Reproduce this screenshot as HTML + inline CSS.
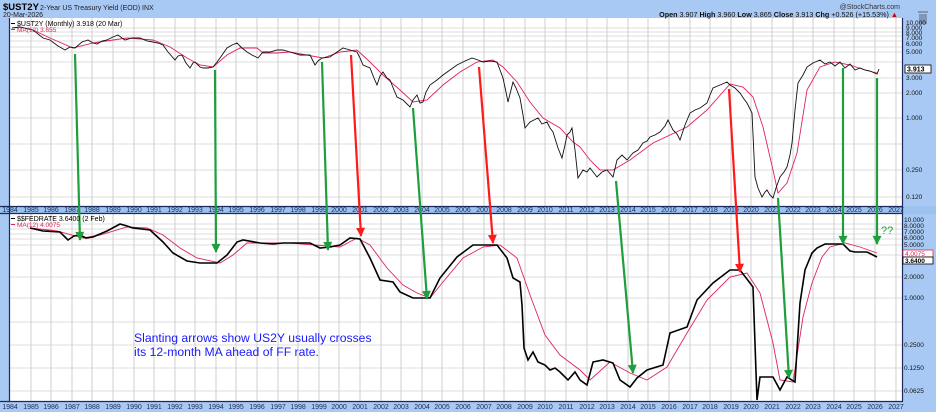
<!DOCTYPE html>
<html><head><meta charset="utf-8"><style>
html,body{margin:0;padding:0;background:#a9c9f5;}
svg{display:block;font-family:"Liberation Sans",sans-serif;}
</style></head><body>
<svg width="936" height="412" viewBox="0 0 936 412" xmlns="http://www.w3.org/2000/svg">
<defs>
<marker id="ag" viewBox="0 0 10 10" refX="9" refY="5" markerWidth="10" markerHeight="9" markerUnits="userSpaceOnUse" orient="auto"><path d="M0,0 L10,5 L0,10 Z" fill="#1e9e3c"/></marker>
<marker id="ar" viewBox="0 0 10 10" refX="9" refY="5" markerWidth="10" markerHeight="9" markerUnits="userSpaceOnUse" orient="auto"><path d="M0,0 L10,5 L0,10 Z" fill="#ff1a1a"/></marker>
</defs>
<rect width="936" height="412" fill="#a9c9f5"/>
<rect x="9" y="18" width="893" height="188" fill="#fff"/>
<rect x="9" y="214" width="893" height="187" fill="#fff"/>
<g stroke="#dcdcdc" stroke-width="1">
<path d="M9 28H902M9 32H902M9 36H902M9 41H902M9 47H902M9 52H902M9 62H902M9 78H902M9 93H902M9 118H902M9 144H902M9 170H902M9 197H902"/>
<path d="M9 224H902M9 229H902M9 234H902M9 239H902M9 245H902M9 255H902M9 277H902M9 298H902M9 322H902M9 345H902M9 368H902M9 391H902"/>
</g>
<g stroke="#cfcfcf" stroke-width="1">
<path d="M31 18V206M51 18V206M72 18V206M92 18V206M113 18V206M134 18V206M154 18V206M175 18V206M195 18V206M216 18V206M236 18V206M257 18V206M278 18V206M298 18V206M319 18V206M339 18V206M360 18V206M381 18V206M401 18V206M422 18V206M442 18V206M463 18V206M484 18V206M504 18V206M525 18V206M545 18V206M566 18V206M587 18V206M607 18V206M628 18V206M648 18V206M669 18V206M690 18V206M710 18V206M731 18V206M751 18V206M772 18V206M793 18V206M813 18V206M834 18V206M854 18V206M875 18V206M896 18V206"/>
<path d="M31 214V401M51 214V401M72 214V401M92 214V401M113 214V401M134 214V401M154 214V401M175 214V401M195 214V401M216 214V401M236 214V401M257 214V401M278 214V401M298 214V401M319 214V401M339 214V401M360 214V401M381 214V401M401 214V401M422 214V401M442 214V401M463 214V401M484 214V401M504 214V401M525 214V401M545 214V401M566 214V401M587 214V401M607 214V401M628 214V401M648 214V401M669 214V401M690 214V401M710 214V401M731 214V401M751 214V401M772 214V401M793 214V401M813 214V401M834 214V401M854 214V401M875 214V401M896 214V401"/>
</g>
<rect x="0" y="206" width="936" height="8" fill="#9cc3f0"/>
<path d="M0 206.5H903M0 213.5H903M0 401.5H903M9.5 18V401M902.5 18V401" stroke="#1b2a5a" stroke-width="1.2" fill="none"/>
<g font-size="7" fill="#1b2a5a" text-anchor="middle">
<text x="10" y="212">1984</text><text x="31" y="212">1985</text><text x="51" y="212">1986</text><text x="72" y="212">1987</text><text x="92" y="212">1988</text><text x="113" y="212">1989</text><text x="134" y="212">1990</text><text x="154" y="212">1991</text><text x="175" y="212">1992</text><text x="195" y="212">1993</text><text x="216" y="212">1994</text><text x="236" y="212">1995</text><text x="257" y="212">1996</text><text x="278" y="212">1997</text><text x="298" y="212">1998</text><text x="319" y="212">1999</text><text x="339" y="212">2000</text><text x="360" y="212">2001</text><text x="381" y="212">2002</text><text x="401" y="212">2003</text><text x="422" y="212">2004</text><text x="442" y="212">2005</text><text x="463" y="212">2006</text><text x="484" y="212">2007</text><text x="504" y="212">2008</text><text x="525" y="212">2009</text><text x="545" y="212">2010</text><text x="566" y="212">2011</text><text x="587" y="212">2012</text><text x="607" y="212">2013</text><text x="628" y="212">2014</text><text x="648" y="212">2015</text><text x="669" y="212">2016</text><text x="690" y="212">2017</text><text x="710" y="212">2018</text><text x="731" y="212">2019</text><text x="751" y="212">2020</text><text x="772" y="212">2021</text><text x="793" y="212">2022</text><text x="813" y="212">2023</text><text x="834" y="212">2024</text><text x="854" y="212">2025</text><text x="875" y="212">2026</text><text x="896" y="212">2027</text>
</g>
<g font-size="7" fill="#1b2a5a" text-anchor="middle">
<text x="10" y="409">1984</text><text x="31" y="409">1985</text><text x="51" y="409">1986</text><text x="72" y="409">1987</text><text x="92" y="409">1988</text><text x="113" y="409">1989</text><text x="134" y="409">1990</text><text x="154" y="409">1991</text><text x="175" y="409">1992</text><text x="195" y="409">1993</text><text x="216" y="409">1994</text><text x="236" y="409">1995</text><text x="257" y="409">1996</text><text x="278" y="409">1997</text><text x="298" y="409">1998</text><text x="319" y="409">1999</text><text x="339" y="409">2000</text><text x="360" y="409">2001</text><text x="381" y="409">2002</text><text x="401" y="409">2003</text><text x="422" y="409">2004</text><text x="442" y="409">2005</text><text x="463" y="409">2006</text><text x="484" y="409">2007</text><text x="504" y="409">2008</text><text x="525" y="409">2009</text><text x="545" y="409">2010</text><text x="566" y="409">2011</text><text x="587" y="409">2012</text><text x="607" y="409">2013</text><text x="628" y="409">2014</text><text x="648" y="409">2015</text><text x="669" y="409">2016</text><text x="690" y="409">2017</text><text x="710" y="409">2018</text><text x="731" y="409">2019</text><text x="751" y="409">2020</text><text x="772" y="409">2021</text><text x="793" y="409">2022</text><text x="813" y="409">2023</text><text x="834" y="409">2024</text><text x="854" y="409">2025</text><text x="875" y="409">2026</text><text x="896" y="409">2027</text>
</g>
<polyline fill="none" stroke="#e0245a" stroke-width="0.9" points="33,30 50,38 73,48 93,43 113,40 127,38 153,40 170,47 187,58 200,65 213,67 227,55 240,48 257,48 263,53 277,53 290,52 323,58 340,52 357,50 370,62 383,75 400,90 413,102 427,100 443,85 460,72 477,62 493,60 503,67 517,82 530,102 543,118 560,128 573,142 580,147 590,160 600,170 613,170 630,160 653,143 687,127 707,110 730,84 743,87 753,97 763,127 773,170 778,193 787,183 797,153 807,90 820,67 835,62 850,65 865,70 877,73"/>
<polyline fill="none" stroke="#111" stroke-width="0.9" points="12,28 20,27 33,30 43,38 50,40 58,46 65,50 70,47 75,48 82,42 88,40 93,43 97,44 102,41 107,40 113,37 118,35 122,38 125,40 132,38 140,38 147,41 153,42 158,43 163,45 168,52 175,60 178,56 182,55 186,63 190,68 193,63 195,62 200,67 203,68 208,68 213,67 217,62 220,58 227,48 232,45 237,43 242,48 247,52 252,55 258,58 263,52 270,52 277,50 283,50 290,52 300,55 310,55 315,65 318,61 322,58 330,57 337,52 343,48 350,50 357,52 360,58 363,65 370,68 374,78 377,85 380,76 383,72 387,78 390,80 394,90 397,97 403,100 410,107 413,100 417,95 420,103 423,102 426,92 430,85 437,80 443,75 450,70 457,65 465,61 472,58 478,60 483,62 490,61 497,62 500,70 503,78 506,92 508,102 511,90 513,82 516,88 520,98 523,115 525,128 530,122 534,120 538,118 542,124 547,122 550,128 553,132 558,148 562,158 565,145 567,135 570,132 572,128 575,150 578,178 583,170 587,172 590,168 597,177 602,172 607,170 613,177 617,160 622,155 627,160 633,153 638,150 643,143 647,141 650,137 655,135 660,132 665,126 668,120 673,130 677,134 680,140 685,125 690,113 695,110 700,108 707,103 710,95 713,88 720,85 727,82 730,85 735,88 740,93 744,99 747,103 752,113 755,177 758,188 762,197 765,192 767,190 770,195 773,198 776,188 780,177 784,172 787,167 790,155 792,143 795,110 798,83 803,75 807,67 810,65 813,63 820,60 825,64 830,62 835,66 840,62 845,68 850,64 855,70 860,68 865,70 870,71 877,74 879,69"/>
<polyline fill="none" stroke="#e0245a" stroke-width="0.9" points="30,228 57,231 83,238 100,235 127,227 147,228 163,235 180,248 197,258 220,263 233,255 247,243 267,243 290,243 340,247 357,238 370,245 387,268 403,285 417,293 430,298 443,282 463,258 483,247 500,245 517,258 530,295 545,335 560,355 580,370 590,380 610,362 630,373 647,380 667,367 687,333 707,300 730,277 747,273 760,293 773,343 780,380 793,382 803,317 812,283 822,257 830,247 845,243 860,247 877,253"/>
<polyline fill="none" stroke="#000" stroke-width="1.6" points="30,228 43,231 60,232 68,240 74,236 80,235 86,238 93,237 107,231 120,224 127,226 133,228 150,230 163,242 173,253 187,261 200,263 217,263 227,255 237,242 243,240 260,243 273,244 283,243 300,243 310,243 320,248 330,247 340,245 350,238 360,239 370,258 380,280 393,282 400,292 413,298 430,298 440,278 457,257 473,245 497,245 507,258 513,278 520,282 522,305 524,348 528,360 533,352 538,362 545,365 550,370 555,368 560,372 568,380 575,372 580,380 587,385 593,362 603,360 613,363 620,380 630,387 637,378 647,370 663,365 670,333 687,327 697,300 713,283 730,270 740,270 750,283 753,287 757,400 760,377 773,377 780,390 787,377 795,382 800,303 805,270 812,253 817,248 825,244 843,244 850,251 855,252 867,252 877,257"/>
<g stroke-width="2.2" fill="none">
<line x1="75" y1="54" x2="80" y2="240" stroke="#1e9e3c" marker-end="url(#ag)"/>
<line x1="215" y1="70" x2="216" y2="252" stroke="#1e9e3c" marker-end="url(#ag)"/>
<line x1="322" y1="62" x2="328" y2="250" stroke="#1e9e3c" marker-end="url(#ag)"/>
<line x1="351" y1="55" x2="361" y2="236" stroke="#ff1a1a" marker-end="url(#ar)"/>
<line x1="413" y1="108" x2="427" y2="299" stroke="#1e9e3c" marker-end="url(#ag)"/>
<line x1="479" y1="67" x2="493" y2="243" stroke="#ff1a1a" marker-end="url(#ar)"/>
<line x1="616" y1="181" x2="633" y2="373" stroke="#1e9e3c" marker-end="url(#ag)"/>
<line x1="729" y1="89" x2="740" y2="272" stroke="#ff1a1a" marker-end="url(#ar)"/>
<line x1="778" y1="198" x2="789" y2="378" stroke="#1e9e3c" marker-end="url(#ag)"/>
<line x1="843" y1="68" x2="843" y2="244" stroke="#1e9e3c" marker-end="url(#ag)"/>
<line x1="877" y1="78" x2="877" y2="244" stroke="#1e9e3c" marker-end="url(#ag)"/>
</g>
<text x="881" y="234" font-size="11" fill="#1e9e3c">??</text>
<text x="3" y="10" font-size="9.5" font-weight="bold" fill="#000">$UST2Y</text>
<text x="40" y="10" font-size="7" fill="#222">2-Year US Treasury Yield (EOD)  INX</text>
<text x="3" y="17" font-size="7" fill="#222">20-Mar-2026</text>
<text x="900" y="9" font-size="7" fill="#333" text-anchor="end">@StockCharts.com</text>
<text x="898" y="17" font-size="7.2" fill="#111" text-anchor="end"><tspan font-weight="bold">Open</tspan> 3.907 <tspan font-weight="bold">High</tspan> 3.960 <tspan font-weight="bold">Low</tspan> 3.865 <tspan font-weight="bold">Close</tspan> 3.913 <tspan font-weight="bold">Chg</tspan> +0.526 (+15.53%)<tspan fill="#c00"> ▲</tspan></text>
<g fill="#7f96b8"><rect x="918" y="11" width="10" height="2"/><rect x="919" y="14" width="8" height="10"/></g>
<path d="M11 23.5H15" stroke="#000"/><text x="17" y="26" font-size="7" fill="#000">$UST2Y (Monthly) 3.918 (20 Mar)</text>
<path d="M11 29.5H15" stroke="#e0245a"/><text x="17" y="32" font-size="6.5" fill="#e0245a">MA(12) 3.655</text>
<path d="M11 218.5H15" stroke="#000"/><text x="17" y="221" font-size="7" fill="#000">$$FEDRATE 3.6400 (2 Feb)</text>
<path d="M11 224.5H15" stroke="#e0245a"/><text x="17" y="227" font-size="6.5" fill="#e0245a">MA(12) 4.0075</text>
<g font-size="6.5" fill="#111">
<text x="906" y="25">10.000</text><text x="906" y="30">9.000</text><text x="906" y="35">8.000</text><text x="906" y="40">7.000</text><text x="906" y="46">6.000</text><text x="906" y="54">5.000</text><text x="906" y="80">3.000</text><text x="906" y="95">2.000</text><text x="906" y="120">1.000</text><text x="906" y="172">0.250</text><text x="906" y="199">0.120</text>
<text x="904" y="222">10.000</text><text x="904" y="228">8.0000</text><text x="904" y="234">7.0000</text><text x="904" y="240">6.0000</text><text x="904" y="247">5.0000</text><text x="904" y="279">2.0000</text><text x="904" y="300">1.0000</text><text x="904" y="347">0.2500</text><text x="904" y="370">0.1250</text><text x="904" y="393">0.0625</text>
</g>
<rect x="905" y="65" width="26" height="8" fill="#fff" stroke="#000" stroke-width="0.8"/>
<text x="907" y="71.5" font-size="7" font-weight="bold" fill="#000">3.913</text>
<rect x="903" y="250" width="30" height="7" fill="#fff" stroke="#e0245a" stroke-width="0.8"/>
<text x="905" y="256" font-size="6.5" fill="#e0245a">4.0075</text>
<rect x="903" y="257" width="30" height="7" fill="#fff" stroke="#000" stroke-width="0.8"/>
<text x="905" y="263" font-size="6.5" font-weight="bold" fill="#000">3.6400</text>
<text x="134" y="342" font-size="12.2" fill="#1a1aff">Slanting arrows show US2Y usually crosses</text>
<text x="134" y="356" font-size="12.2" fill="#1a1aff">its 12-month MA ahead of FF rate.</text>
</svg>
</body></html>
